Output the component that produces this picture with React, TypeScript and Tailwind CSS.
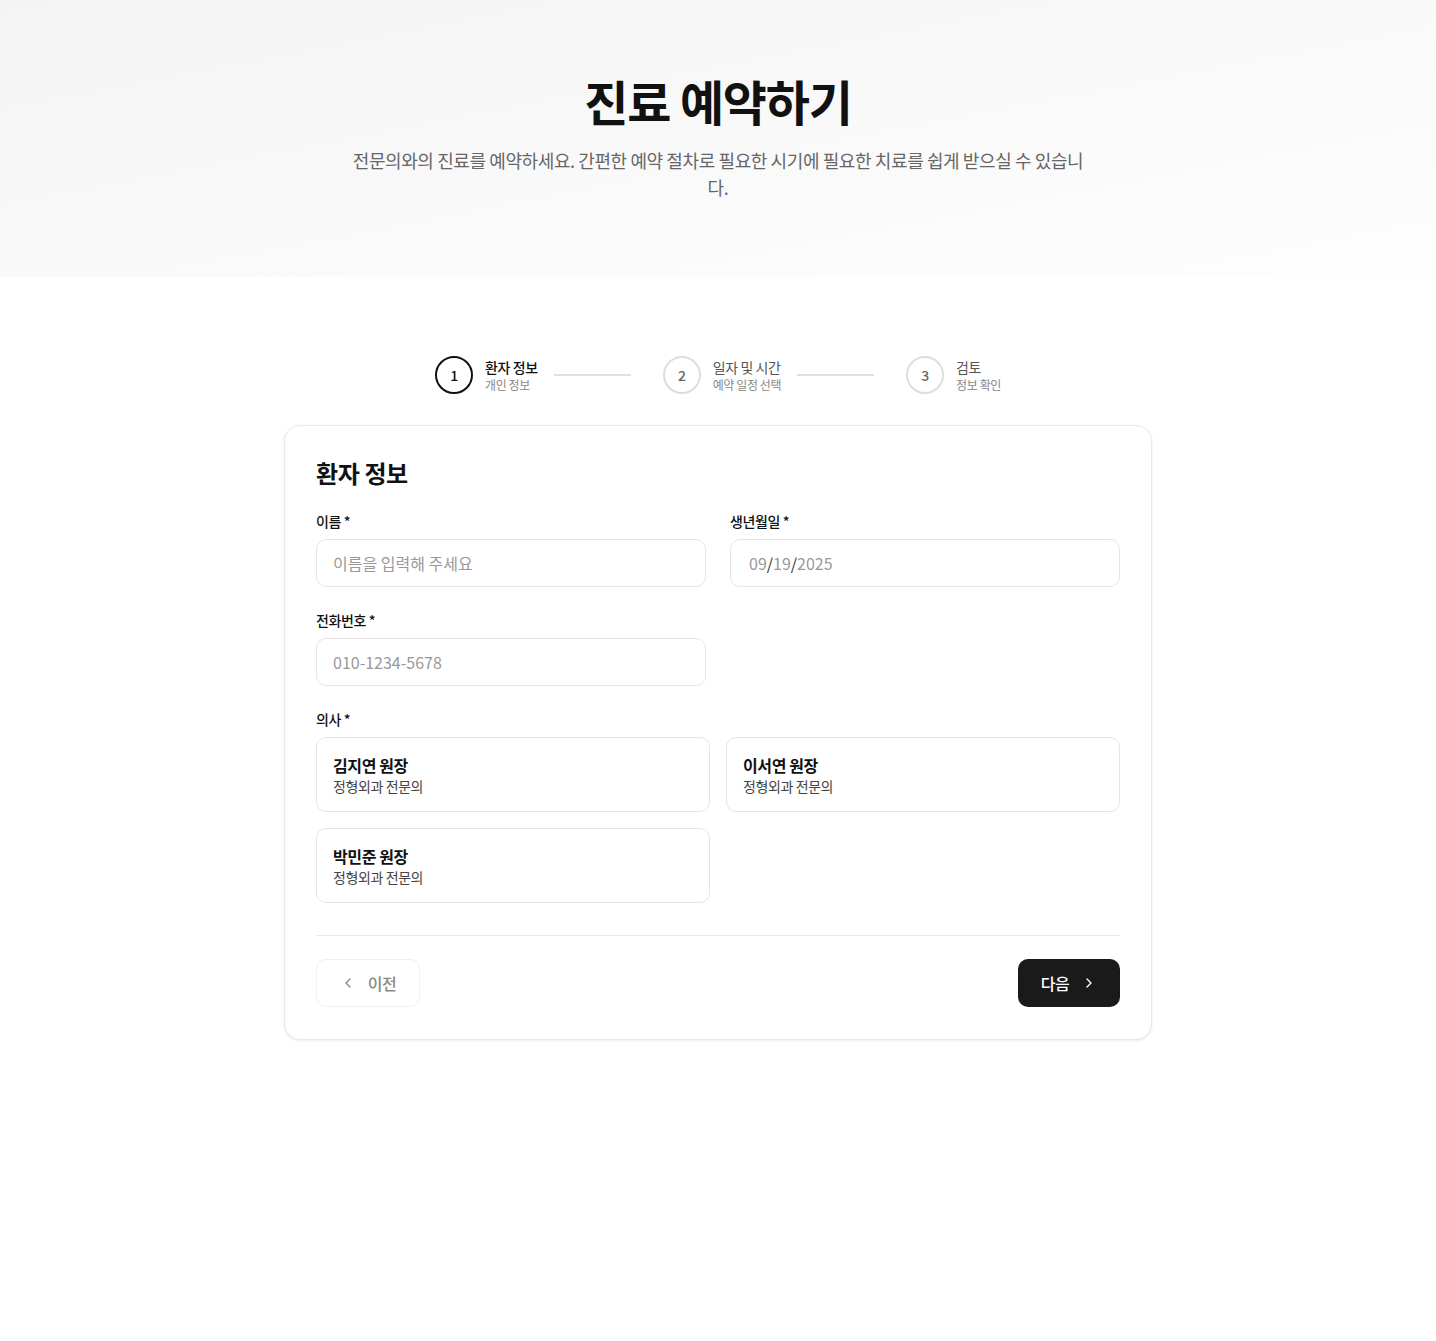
import { ChevronLeft, ChevronRight } from "lucide-react";

const steps = [
  { n: 1, title: "환자 정보", sub: "개인 정보", active: true },
  { n: 2, title: "일자 및 시간", sub: "예약 일정 선택", active: false },
  { n: 3, title: "검토", sub: "정보 확인", active: false },
];

const doctors = [
  { name: "김지연 원장", dept: "정형외과 전문의" },
  { name: "이서연 원장", dept: "정형외과 전문의" },
  { name: "박민준 원장", dept: "정형외과 전문의" },
];

function Field({ label, placeholder }: { label: string; placeholder: string }) {
  return (
    <div>
      <label className="mb-2 block text-sm font-medium leading-5 text-[#111]">{label}</label>
      <input
        placeholder={placeholder}
        className="h-12 w-full rounded-[10px] border border-[#e5e5e5] bg-white px-4 text-base tracking-normal text-[#111] placeholder:text-[#999] focus:outline-none"
      />
    </div>
  );
}

export default function App() {
  return (
    <div
      className="min-h-screen bg-white tracking-tight text-[#111]"
      style={{ fontFamily: '"Noto Sans CJK KR", "Noto Sans", sans-serif' }}
    >
      <header className="bg-gradient-to-br from-[#f4f4f4] to-[#fefefe] px-4 pb-[76px] pt-[76px] text-center">
        <h1 className="mb-[23px] text-5xl font-bold leading-none tracking-tight text-[#111]">진료 예약하기</h1>
        <p className="mx-auto max-w-[736px] text-lg leading-[27px] text-[#666]">
          전문의와의 진료를 예약하세요. 간편한 예약 절차로 필요한 시기에 필요한 치료를 쉽게 받으실 수 있습니다.
        </p>
      </header>

      <main className="mx-auto w-[868px] pb-20 pt-[79px]">
        <ol className="mb-[31px] flex items-center justify-center">
          {steps.map((s, i) => (
            <li key={s.n} className="flex items-center">
              <div
                className={
                  s.active
                    ? "flex h-[38px] w-[38px] items-center justify-center rounded-full border-2 border-[#111] text-sm font-medium text-[#111]"
                    : "flex h-[38px] w-[38px] items-center justify-center rounded-full border-2 border-[#ddd] text-sm font-medium text-[#666]"
                }
              >
                {s.n}
              </div>
              <div className="ml-3">
                <p className={s.active ? "text-sm font-medium leading-5 text-[#111]" : "text-sm leading-5 text-[#555]"}>
                  {s.title}
                </p>
                <p className="text-xs leading-4 text-[#888]">{s.sub}</p>
              </div>
              {i < steps.length - 1 ? <div className="ml-4 mr-8 h-0.5 w-[77px] bg-[#e0e0e0]" /> : null}
            </li>
          ))}
        </ol>

        <section className="rounded-2xl border border-[#e8e8e8] bg-white px-[31px] pb-8 pt-[31px] shadow-[0_1px_3px_rgba(0,0,0,0.08)]">
          <h2 className="mb-[22px] text-2xl font-bold leading-8 text-[#111]">환자 정보</h2>

          <div className="grid grid-cols-2 gap-x-6 gap-y-[23px]">
            <Field label="이름 *" placeholder="이름을 입력해 주세요" />
            <div>
              <label className="mb-2 block text-sm font-medium leading-5 text-[#111]">생년월일 *</label>
              <div className="flex h-12 w-full items-center rounded-[10px] border border-[#e5e5e5] bg-white px-[18px] text-base tracking-normal text-[#999]">
                09<span className="text-[#333]">/</span>19<span className="text-[#333]">/</span>2025
              </div>
            </div>
            <Field label="전화번호 *" placeholder="010-1234-5678" />
            <div />
          </div>

          <div className="mt-[23px]">
            <p className="mb-2 text-sm font-medium leading-5 text-[#111]">의사 *</p>
            <div className="grid grid-cols-2 gap-4">
              {doctors.map((d) => (
                <button
                  key={d.name}
                  type="button"
                  className="h-[75px] rounded-[10px] border border-[#e5e5e5] bg-white px-4 text-left"
                >
                  <p className="text-base font-bold leading-[22px] text-[#111]">{d.name}</p>
                  <p className="text-sm leading-5 text-[#444]">{d.dept}</p>
                </button>
              ))}
            </div>
          </div>

          <div className="mt-8 flex items-center justify-between border-t border-[#e8e8e8] pt-[23px]">
            <button
              type="button"
              className="flex h-12 w-[104px] items-center justify-center gap-3 rounded-[10px] border border-[#f0f0f0] bg-white text-base font-medium text-[#888]"
            >
              <ChevronLeft className="h-4 w-4" strokeWidth={2} />
              이전
            </button>
            <button
              type="button"
              className="flex h-12 w-[102px] items-center justify-center gap-3 rounded-[10px] bg-[#1a1a1a] text-base font-medium text-white"
            >
              다음
              <ChevronRight className="h-4 w-4" strokeWidth={2} />
            </button>
          </div>
        </section>
      </main>
    </div>
  );
}
